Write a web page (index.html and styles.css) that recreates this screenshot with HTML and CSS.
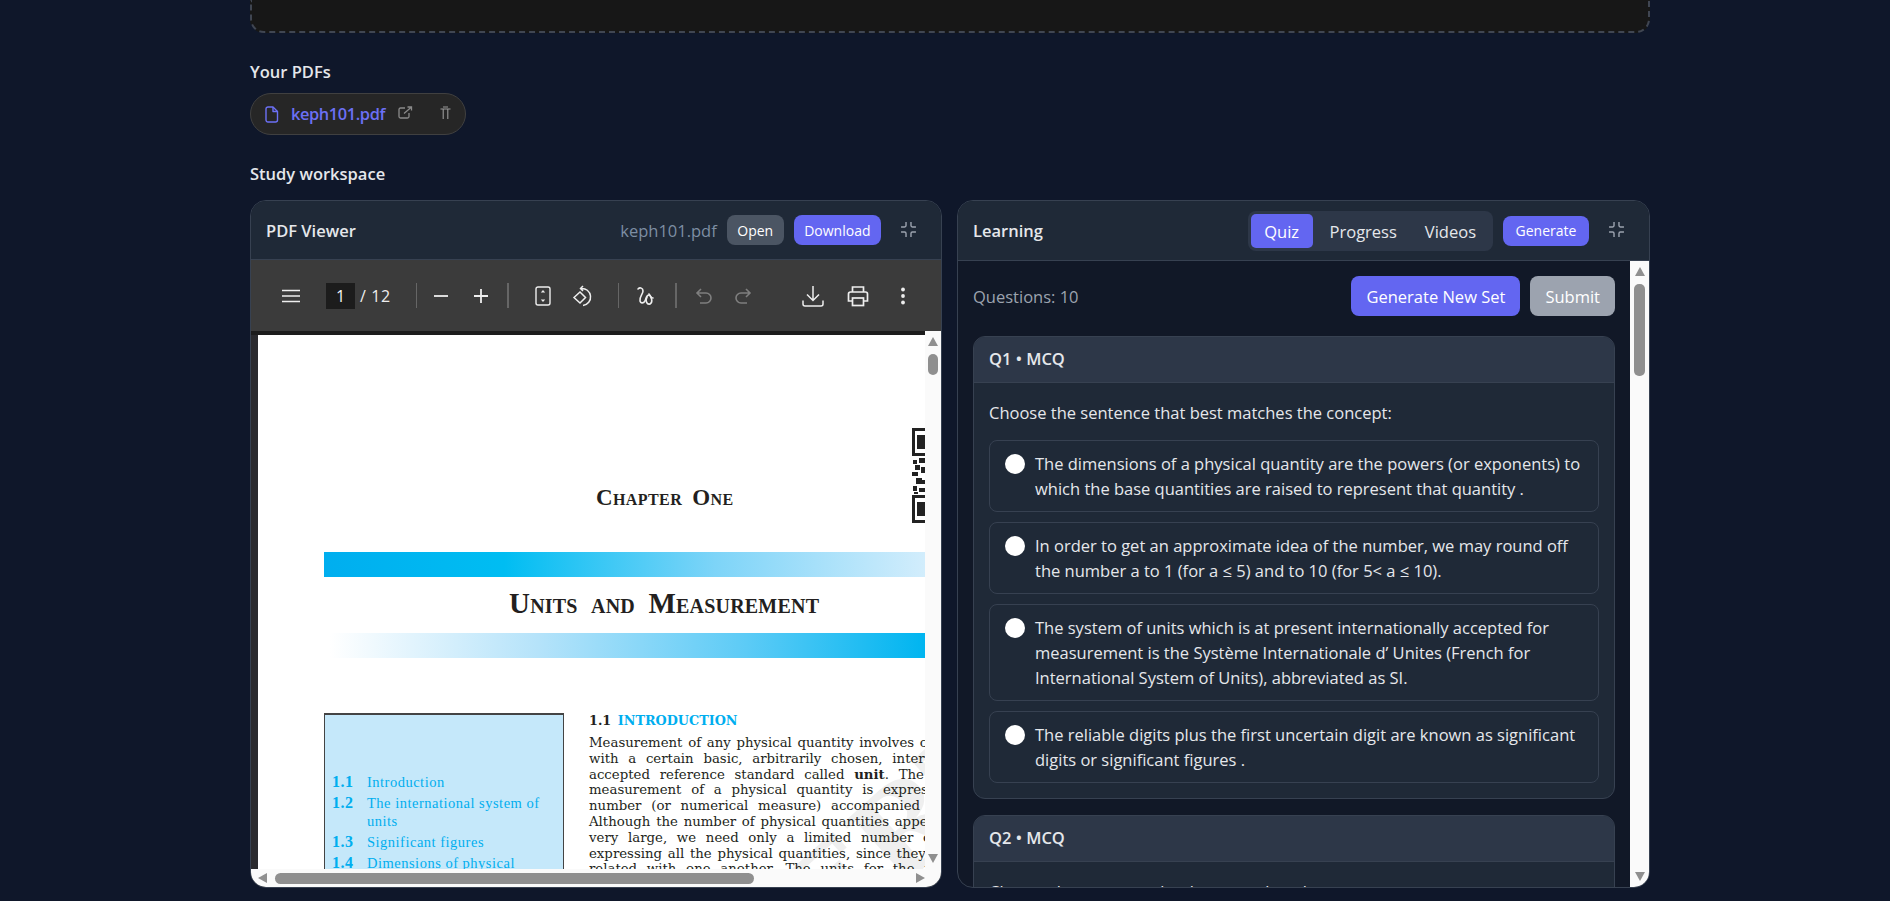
FILE: index.html
```html
<!DOCTYPE html>
<html lang="en">
<head>
  <meta charset="UTF-8">
  <meta name="viewport" content="width=device-width, initial-scale=1.0">
  <title>Study workspace</title>
  <link rel="stylesheet" href="styles.css">
</head>
<body>
  <main class="wrap">
    <div class="upload-box"></div>

    <h2 class="section-title pdfs-title">Your PDFs</h2>
    <div class="pdf-pill">
      <svg class="pill-file" viewBox="0 0 14 17" fill="none" stroke="#6c70f5" stroke-width="1.4" stroke-linejoin="round"><path d="M3 1h5l4.500 4.500V14a2 2 0 0 1-2 2H3a2 2 0 0 1-2-2V3a2 2 0 0 1 2-2z"/><path d="M8 1v4.500h4.500"/></svg>
      <span class="pill-name">keph101.pdf</span>
      <svg class="pill-link" viewBox="0 0 15 13" fill="none" stroke="#8a8a8a" stroke-width="1.300"><path d="M7 2H2.500a1.500 1.500 0 0 0-1.500 1.500v7A1.500 1.500 0 0 0 2.500 12h7a1.500 1.500 0 0 0 1.500-1.500V7"/><path d="M6 7.500 13.500 1M9.500 1h4v3.500"/></svg>
      <svg class="pill-pin" viewBox="0 0 11 13" fill="none" stroke="#9a9a9a" stroke-width="1.100"><path d="M0.500 3h10M3 1h5M3.200 3v10M7.800 3v10"/></svg>
    </div>

    <h2 class="section-title study-title">Study workspace</h2>
    <div class="workspace">

      <section class="panel">
        <header class="panel-head head-pdf">
          <span class="panel-title">PDF Viewer</span>
          <span class="file-name">keph101.pdf</span>
          <button class="btn btn-dark">Open</button>
          <button class="btn btn-primary">Download</button>
          <svg class="collapse" viewBox="0 0 24 24" fill="none" stroke="#9ca3af" stroke-width="2"><path d="M8.500 1.500v5a2 2 0 0 1-2 2h-5M22.500 8.500h-5a2 2 0 0 1-2-2v-5M15.500 22.500v-5a2 2 0 0 1 2-2h5M1.500 15.500h5a2 2 0 0 1 2 2v5"/></svg>
        </header>

        <div class="toolbar">
          <svg class="tool tool-menu" viewBox="0 0 20 20" fill="none" stroke="#eee" stroke-width="1.500"><path d="M1 4.500h18M1 10h18M1 15.500h18"/></svg>
          <span class="page-input">1</span>
          <span class="page-total">/ 12</span>
          <i class="sep sep-a"></i>
          <svg class="tool tool-minus" viewBox="0 0 20 20" fill="none" stroke="#eee" stroke-width="1.800"><path d="M3 10h14"/></svg>
          <svg class="tool tool-plus" viewBox="0 0 20 20" fill="none" stroke="#eee" stroke-width="1.800"><path d="M3 10h14M10 3v14"/></svg>
          <i class="sep sep-b"></i>
          <svg class="tool tool-fit" viewBox="0 0 20 20" fill="none" stroke="#eee" stroke-width="1.400"><rect x="3" y="1" width="14" height="18" rx="2"/><path d="M10 4 7.800 6.500h4.400zM10 16l-2.200-2.500h4.400z" fill="#eee" stroke="none"/></svg>
          <svg class="tool tool-rotate" viewBox="0 0 22 22" fill="none" stroke="#eee" stroke-width="1.500"><path d="M2 12.500 8 7l5.500 5.500L8 18z"/><path d="M11 1 8.500 3.500 11 6M9 3.500a8.500 8.500 0 1 1 2 17"/></svg>
          <i class="sep sep-c"></i>
          <svg class="tool tool-draw" viewBox="0 0 20 20" fill="none" stroke="#eee" stroke-width="1.600" stroke-linecap="round"><path d="M2 3c2-2 5-1 5 2 0 3-4 6-3 10 .5 2 3 3 5 0 1.500-3 1-6 4-6 2 0 1 3 4 3"/><path d="M13 8c3 4 4 8 1 10-3 1-5-3-3-7"/></svg>
          <i class="sep sep-d"></i>
          <svg class="tool tool-undo" viewBox="0 0 20 20" fill="none" stroke="#7f7f7f" stroke-width="1.600"><path d="M7 3 3 7l4 4M3 7h9a4.500 4.500 0 0 1 0 10H6"/></svg>
          <svg class="tool tool-redo" viewBox="0 0 20 20" fill="none" stroke="#7f7f7f" stroke-width="1.600"><path d="m13 3 4 4-4 4M17 7H8a4.500 4.500 0 0 0 0 10h6"/></svg>
          <svg class="tool tool-save" viewBox="0 0 22 22" fill="none" stroke="#eee" stroke-width="1.500"><path d="M11 1v14M5 9.500l6 6 6-6M1 15.500V19a2 2 0 0 0 2 2h16a2 2 0 0 0 2-2v-3.500"/></svg>
          <svg class="tool tool-print" viewBox="0 0 22 22" fill="none" stroke="#eee" stroke-width="1.700"><path d="M5.500 7V2h11v5M5.500 16H1.500V9a2 2 0 0 1 2-2h15a2 2 0 0 1 2 2v7h-4"/><rect x="5.500" y="13" width="11" height="7.500"/></svg>
          <svg class="tool tool-more" viewBox="0 0 20 20" fill="#eee"><circle cx="10" cy="3.500" r="1.900"/><circle cx="10" cy="10" r="1.900"/><circle cx="10" cy="16.500" r="1.900"/></svg>
        </div>

        <div class="viewer">
          <div class="viewer-main">
            <div class="pdf-page">
              <div class="watermark">NCERT</div>
              <svg class="qr" viewBox="0 0 13 95" fill="#222"><path d="M0 0h13v3H3v22h10v3H0z"/><rect x="5" y="7" width="8" height="14"/><rect x="1" y="32" width="4" height="4"/><rect x="7" y="30" width="6" height="5"/><rect x="3" y="37" width="5" height="5"/><rect x="9" y="39" width="4" height="6"/><rect x="0" y="44" width="6" height="4"/><rect x="4" y="50" width="6" height="6"/><rect x="10" y="52" width="3" height="4"/><rect x="1" y="58" width="4" height="5"/><rect x="7" y="60" width="6" height="4"/><rect x="2" y="64" width="4" height="2"/><path d="M0 67h13v3H3v22h10v3H0z"/><rect x="5" y="74" width="8" height="14"/></svg>
              <div class="chapter">Chapter One</div>
              <div class="bar bar-right"></div>
              <div class="unit-title">Units and Measurement</div>
              <div class="bar bar-left"></div>
              <div class="columns">
                <div class="toc">
                  <div class="toc-row"><b>1.1</b><span>Introduction</span></div>
                  <div class="toc-row"><b>1.2</b><span>The international system of units</span></div>
                  <div class="toc-row"><b>1.3</b><span>Significant figures</span></div>
                  <div class="toc-row"><b>1.4</b><span>Dimensions of physical quantities</span></div>
                </div>
                <div class="intro">
                  <h3 class="intro-head">1.1 <span>Introduction</span></h3>
                  <div class="line">Measurement of any physical quantity involves comparison</div>
                  <div class="line loose">with a certain basic, arbitrarily chosen, internationally</div>
                  <div class="line loose">accepted reference standard called <b>unit</b>. The result of a</div>
                  <div class="line loose">measurement of a physical quantity is expressed by a</div>
                  <div class="line loose">number (or numerical measure) accompanied by a unit.</div>
                  <div class="line">Although the number of physical quantities appears to be</div>
                  <div class="line loose">very large, we need only a limited number of units for</div>
                  <div class="line">expressing all the physical quantities, since they are inter-</div>
                  <div class="line loose">related with one another. The units for the fundamental</div>
                </div>
              </div>
            </div>
            <div class="vbar">
              <i class="arrow-up"></i>
              <i class="vbar-thumb"></i>
              <i class="vbar-space"></i>
              <i class="arrow-down"></i>
            </div>
          </div>
          <div class="hbar">
            <i class="arrow-left"></i>
            <i class="hbar-thumb"></i>
            <i class="arrow-right"></i>
          </div>
        </div>
      </section>

      <section class="panel">
        <header class="panel-head">
          <span class="panel-title">Learning</span>
          <div class="tabs">
            <span class="tab tab-active">Quiz</span>
            <span class="tab">Progress</span>
            <span class="tab">Videos</span>
          </div>
          <button class="btn btn-primary btn-generate">Generate</button>
          <svg class="collapse" viewBox="0 0 24 24" fill="none" stroke="#9ca3af" stroke-width="2"><path d="M8.500 1.500v5a2 2 0 0 1-2 2h-5M22.500 8.500h-5a2 2 0 0 1-2-2v-5M15.500 22.500v-5a2 2 0 0 1 2-2h5M1.500 15.500h5a2 2 0 0 1 2 2v5"/></svg>
        </header>

        <div class="learning">
          <div class="quiz-scroll">
            <div class="quiz-top">
              <span class="q-count">Questions: 10</span>
              <button class="btn-big btn-primary">Generate New Set</button>
              <button class="btn-big btn-muted">Submit</button>
            </div>

            <article class="q-card">
              <div class="q-head">Q1 • MCQ</div>
              <div class="q-body">
                <p class="q-text">Choose the sentence that best matches the concept:</p>
                <div class="option"><i class="radio"></i><span>The dimensions of a physical quantity are the powers (or exponents) to which the base quantities are raised to represent that quantity .</span></div>
                <div class="option"><i class="radio"></i><span>In order to get an approximate idea of the number, we may round off the number a to 1 (for a ≤ 5) and to 10 (for 5&lt; a ≤ 10).</span></div>
                <div class="option"><i class="radio"></i><span>The system of units which is at present internationally accepted for measurement is the Système Internationale d’ Unites (French for International System of Units), abbreviated as SI.</span></div>
                <div class="option"><i class="radio"></i><span>The reliable digits plus the first uncertain digit are known as significant digits or significant figures .</span></div>
              </div>
            </article>

            <article class="q-card">
              <div class="q-head">Q2 • MCQ</div>
              <div class="q-body">
                <p class="q-text">Choose the sentence that best matches the concept:</p>
              </div>
            </article>
          </div>
          <div class="vbar vbar-learning">
            <i class="arrow-up"></i>
            <i class="vbar-thumb"></i>
            <i class="vbar-space"></i>
            <i class="arrow-down"></i>
          </div>
        </div>
      </section>

    </div>
  </main>
</body>
</html>
```

FILE: styles.css
```css
* {
  box-sizing: border-box;
}

body {
  margin: 0;
  height: 901px;
  overflow: hidden;
  background-color: #0f172a;
  font-family: "Open Sans", "Noto Sans", sans-serif;
  color: #e5e7eb;
}

.wrap {
  width: 1400px;
  margin-left: 250px;
}

.upload-box {
  height: 33px;
  background-color: #171717;
  border: 2px dashed #404652;
  border-top: none;
  border-radius: 0 0 14px 14px;
}

.section-title {
  margin: 0;
  font-size: 16.5px;
  line-height: 24px;
  font-weight: 600;
  color: #e5e7eb;
}

.pdfs-title {
  margin-top: 27px;
}

.study-title {
  margin-top: 27px;
}

.pdf-pill {
  display: flex;
  align-items: center;
  width: 216px;
  height: 42px;
  margin-top: 9px;
  padding-left: 14px;
  background-color: #262626;
  border: 1px solid #404040;
  border-radius: 21px;
}

.pill-file {
  width: 14px;
  height: 17px;
}

.pill-name {
  margin-left: 12px;
  margin-top: -2px;
  font-size: 16.4px;
  font-weight: 600;
  letter-spacing: -0.4px;
  color: #6c70f5;
}

.pill-link {
  width: 15px;
  height: 13px;
  margin-left: 13px;
  margin-top: -4px;
}

.pill-pin {
  width: 11px;
  height: 13px;
  margin-left: 27px;
  margin-top: -4px;
}

.workspace {
  display: grid;
  grid-template-columns: 692px 693px;
  gap: 15px;
  margin-top: 14px;
}

.panel {
  display: flex;
  flex-direction: column;
  height: 688px;
  border: 1px solid #374151;
  border-radius: 16px;
  overflow: hidden;
  background-color: #111827;
}

.panel-head {
  display: flex;
  align-items: center;
  flex: none;
  height: 60px;
  padding: 0 24px 0 15px;
  background-color: #1f2937;
  border-bottom: 1px solid #374151;
}

.head-pdf {
  height: 59px;
}

.panel-title {
  margin-right: auto;
  font-size: 16.5px;
  font-weight: 600;
  color: #e5e7eb;
}

.file-name {
  margin-right: 10px;
  font-size: 16.5px;
  color: #7d8ea3;
}

.btn {
  height: 30px;
  margin-right: 10px;
  padding: 0 10.5px;
  border: none;
  border-radius: 8px;
  font-family: inherit;
  font-size: 14px;
  color: #fff;
}

.btn-dark {
  background-color: #4b5563;
}

.btn-primary {
  background-color: #6366f1;
}

.btn-muted {
  background-color: #9ca3af;
}

.btn + .btn-primary {
  margin-right: 19px;
}

.collapse {
  width: 17px;
  height: 17px;
  margin-top: -2px;
}

.btn-generate {
  width: 86px;
  padding: 0;
  margin-left: 10px;
  margin-right: 19px;
}

/* pdf.js toolbar */
.toolbar {
  display: flex;
  align-items: center;
  flex: none;
  height: 71px;
  padding-left: 30px;
  background-color: #3b3b3b;
}

.tool {
  display: block;
  width: 20px;
  height: 20px;
}

.tool-menu {
  margin-right: 25px;
}

.page-input {
  width: 29px;
  height: 26px;
  line-height: 26px;
  background-color: #1c1c1c;
  font-size: 16px;
  text-align: center;
  color: #f5f5f5;
}

.page-total {
  width: 61px;
  padding-left: 5px;
  font-size: 16px;
  letter-spacing: 0.6px;
  color: #eee;
}

.sep {
  display: block;
  width: 1px;
  height: 25px;
  background-color: #666;
}

.tool-minus {
  margin-left: 14px;
}

.tool-plus {
  margin-left: 20px;
}

.sep-b {
  margin-left: 16px;
  width: 2px;
}

.tool-fit {
  margin-left: 24px;
}

.tool-rotate {
  width: 22px;
  height: 22px;
  margin-left: 19px;
}

.sep-c {
  margin-left: 24px;
}

.tool-draw {
  margin-left: 17px;
}

.sep-d {
  margin-left: 19px;
  width: 2px;
}

.tool-undo {
  margin-left: 17px;
}

.tool-redo {
  margin-left: 19px;
}

.tool-save {
  width: 22px;
  height: 22px;
  margin-left: 49px;
}

.tool-print {
  width: 22px;
  height: 22px;
  margin-left: 23px;
}

.tool-more {
  margin-left: 24px;
}

/* viewer area */
.viewer {
  display: flex;
  flex-direction: column;
  flex: 1;
  min-height: 0;
  background-color: #1c1c1c;
}

.viewer-main {
  display: flex;
  flex: 1;
  min-height: 0;
}

.pdf-page {
  position: relative;
  flex: 1;
  min-width: 0;
  margin: 4px 0 0 7px;
  padding: 148px 0 0 66px;
  overflow: hidden;
  background-color: #fff;
  box-shadow: -7px 0 0 #2a2a2e;
  font-family: "DejaVu Serif", "Liberation Serif", serif;
  color: #231f20;
}

.watermark {
  position: absolute;
  left: 350px;
  top: 680px;
  font-size: 120px;
  font-weight: 700;
  line-height: 1;
  color: #efefef;
  transform: rotate(-42deg);
  transform-origin: left top;
}

.qr {
  position: absolute;
  right: 0;
  top: 93px;
  width: 13px;
  height: 95px;
}

.chapter {
  position: relative;
  height: 30px;
  line-height: 30px;
  padding-left: 272px;
  font-family: "Liberation Serif", serif;
  font-size: 23px;
  font-weight: 700;
  font-variant: small-caps;
  letter-spacing: 0.4px;
  word-spacing: 4px;
}

.bar {
  position: relative;
  height: 25px;
}

.bar-right {
  margin-top: 39px;
  background: linear-gradient(90deg, #00aeef 0%, #00bdf2 30%, #7dd4f8 65%, #d2edfc 100%);
}

.bar-left {
  margin-top: 10px;
  margin-left: 6px;
  background: linear-gradient(90deg, #fff 0%, #b5e3fa 35%, #5ccbf6 70%, #00b5f0 100%);
}

.unit-title {
  position: relative;
  height: 40px;
  margin-top: 6px;
  padding-left: 185px;
  line-height: 40px;
  font-family: "Liberation Serif", serif;
  font-size: 29px;
  font-weight: 700;
  font-variant: small-caps;
  letter-spacing: 0.2px;
  word-spacing: 6px;
}

.columns {
  position: relative;
  display: flex;
  margin-top: 55px;
}

.toc {
  flex: none;
  width: 240px;
  height: 300px;
  padding: 58px 6px 0 7px;
  background-color: #c5e8fa;
  border: 1px solid #444;
  border-top-width: 2px;
  font-family: "Liberation Serif", serif;
  font-size: 14.5px;
  line-height: 18px;
  letter-spacing: 0.5px;
  color: #00aeef;
}

.toc-row {
  display: flex;
  margin-bottom: 3px;
}

.toc-row b {
  flex: none;
  width: 35px;
  font-size: 16px;
}

.intro {
  flex: none;
  width: 500px;
  margin-left: 25px;
}

.intro-head {
  margin: -1px 0 5px;
  height: 18px;
  font-size: 12.8px;
  line-height: 18px;
  font-weight: 700;
  color: #231f20;
}

.intro-head span {
  margin-left: 2px;
  text-transform: uppercase;
  color: #00aeef;
}

.line {
  height: 15.800px;
  font-size: 13.300px;
  line-height: 15.800px;
  word-spacing: 1.500px;
  white-space: nowrap;
}

.loose {
  word-spacing: 5.500px;
}

/* scrollbars */
.vbar {
  display: flex;
  flex-direction: column;
  align-items: center;
  flex: none;
  width: 16px;
  padding-top: 6px;
  background-color: #fafafa;
}

.vbar i,
.hbar i {
  display: block;
  flex: none;
}

.vbar-thumb {
  width: 10px;
  height: 21px;
  margin-top: 8px;
  background-color: #8f8f8f;
  border-radius: 5px;
}

.vbar-space {
  flex: 1 !important;
}

.arrow-up {
  width: 0;
  border: 5px solid transparent;
  border-top: none;
  border-bottom: 9px solid #8f8f8f;
}

.arrow-down {
  width: 0;
  margin-bottom: 6px;
  border: 5px solid transparent;
  border-bottom: none;
  border-top: 9px solid #8f8f8f;
}

.hbar {
  display: flex;
  align-items: center;
  flex: none;
  height: 18px;
  padding: 0 16px 0 7px;
  background-color: #fafafa;
}

.hbar-thumb {
  width: 479px;
  height: 11px;
  margin-left: 8px;
  margin-right: auto;
  background-color: #8f8f8f;
  border-radius: 6px;
}

.arrow-left {
  width: 0;
  border: 5px solid transparent;
  border-left: none;
  border-right: 9px solid #8f8f8f;
}

.arrow-right {
  width: 0;
  border: 5px solid transparent;
  border-right: none;
  border-left: 9px solid #8f8f8f;
}

/* learning side */
.tabs {
  display: flex;
  height: 40px;
  padding: 3px;
  background-color: #2d3748;
  border-radius: 8px;
}

.tab {
  padding: 0 14px;
  line-height: 35px;
  font-size: 16.5px;
  color: #e5e7eb;
}

.tab-active {
  padding: 0 13.5px;
  margin-right: 3px;
  background-color: #6366f1;
  border-radius: 5px;
  color: #fff;
}

.learning {
  display: flex;
  flex: 1;
  min-height: 0;
}

.quiz-scroll {
  flex: 1;
  min-width: 0;
  padding: 15px 15px 0;
  overflow: hidden;
}

.vbar-learning {
  width: 19px;
}

.vbar-learning .vbar-thumb {
  width: 11px;
  height: 92px;
}

.quiz-top {
  display: flex;
  align-items: center;
  gap: 10px;
  height: 40px;
}

.q-count {
  margin-right: auto;
  font-size: 16.5px;
  color: #9ca3af;
}

.btn-big {
  height: 40px;
  padding: 0 15px;
  border: none;
  border-radius: 8px;
  font-family: inherit;
  font-size: 16.5px;
  color: #fff;
}

.q-card {
  margin-top: 20px;
  background-color: #1f2937;
  border: 1px solid #374151;
  border-radius: 12px;
  overflow: hidden;
}

.q-card + .q-card {
  margin-top: 16px;
}

.q-head {
  height: 46px;
  padding: 0 15px;
  line-height: 43px;
  background-color: #2d3748;
  border-bottom: 1px solid #374151;
  font-size: 16.5px;
  font-weight: 600;
  color: #e5e7eb;
}

.q-body {
  padding: 16px 15px 15px;
}

.q-text {
  margin: 0 0 13px;
  font-size: 16.5px;
  line-height: 28px;
  color: #e5e7eb;
}

.option {
  display: flex;
  gap: 10px;
  margin-bottom: 10px;
  padding: 10px 15px;
  border: 1px solid #374151;
  border-radius: 8px;
  font-size: 16.5px;
  line-height: 25px;
  color: #e5e7eb;
}

.option:last-child {
  margin-bottom: 0;
}

.radio {
  flex: none;
  width: 20px;
  height: 20px;
  margin-top: 3px;
  background-color: #fff;
  border-radius: 50%;
}
```
